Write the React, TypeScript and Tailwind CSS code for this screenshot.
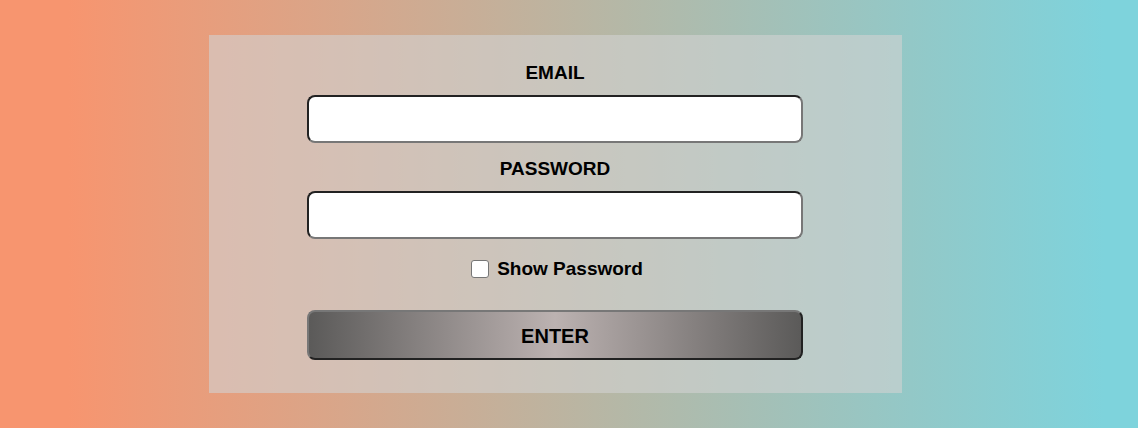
import React from 'react';

export default function App() {
  return (
    <div className="w-full h-[428px] flex items-center justify-center pr-[28px] bg-[linear-gradient(90deg,#f7956f_6%,#d8a68a_30%,#b4b8a7_55%,#93c8c7_80%,#7ed3dc_97%)] font-['Liberation_Sans',Arial,sans-serif]">
      {/* login card */}
      <div className="w-[693px] h-[358px] bg-[#d2d2d2]/60 flex flex-col items-center pt-[27px]">
        <label className="text-[19px] leading-[22px] font-bold text-black">EMAIL</label>
        <input
          type="email"
          className="mt-[11px] w-[496px] h-[48px] bg-white rounded-[8px] border-2 border-t-[#222] border-l-[#222] border-b-[#777] border-r-[#777] outline-none px-3"
        />
        <label className="mt-[15px] text-[19px] leading-[22px] font-bold text-black">PASSWORD</label>
        <input
          type="password"
          className="mt-[11px] w-[496px] h-[48px] bg-white rounded-[8px] border-2 border-t-[#222] border-l-[#222] border-b-[#777] border-r-[#777] outline-none px-3"
        />
        <div className="mt-[19px] flex items-center gap-[8px] h-[22px] pl-[4px]">
          <div className="w-[18px] h-[18px] bg-white border border-[#767676] rounded-[3px]"></div>
          <span className="text-[19px] leading-[22px] font-bold text-black">Show Password</span>
        </div>
        <button className="mt-[30px] w-[496px] h-[50px] pt-[2px] rounded-[8px] border-2 border-t-[#777] border-l-[#777] border-b-[#222] border-r-[#222] bg-[linear-gradient(90deg,#5b5a59,#bcb2b1,#5b5a59)] text-[20px] font-bold text-black">
          ENTER
        </button>
      </div>
    </div>
  );
}
